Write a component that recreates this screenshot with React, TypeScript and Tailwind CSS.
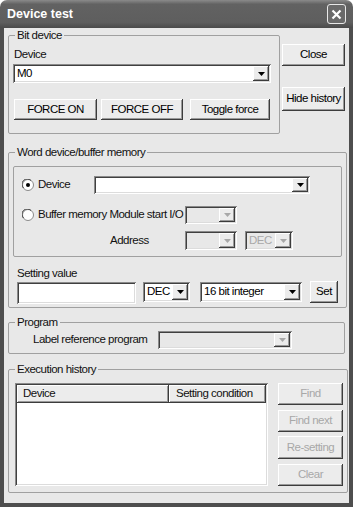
import React from 'react';

const raised =
  'bg-[#ececec] shadow-[inset_-1px_-1px_#3c3c3c,inset_1px_1px_#ffffff,inset_-2px_-2px_#9a9a9a]';
const sunken =
  'shadow-[inset_1px_1px_#8a8a8a,inset_-1px_-1px_#ffffff,inset_2px_2px_#404040,inset_-2px_-2px_#dcdcdc]';

const Arrow = ({ disabled }: { disabled?: boolean }) => (
  <svg width="7" height="4" viewBox="0 0 7 4">
    <polygon points="0,0 7,0 3.5,4" fill={disabled ? '#a8a8a8' : '#000'} />
  </svg>
);

const Btn = ({
  children,
  className = '',
  disabled,
}: {
  children: React.ReactNode;
  className?: string;
  disabled?: boolean;
}) => (
  <div
    className={`flex items-center justify-center leading-none ${raised} ${
      disabled ? 'text-[#a8a8a8]' : 'text-black'
    } ${className}`}
  >
    {children}
  </div>
);

const Combo = ({
  value,
  className = '',
  disabled,
}: {
  value?: string;
  className?: string;
  disabled?: boolean;
}) => (
  <div
    className={`flex items-stretch p-[2px] ${sunken} ${disabled ? 'bg-[#e8e8e8]' : 'bg-white'} ${className}`}
  >
    <span
      className={`flex-1 flex items-center pl-[2px] leading-none overflow-hidden whitespace-nowrap ${
        disabled ? 'text-[#a8a8a8]' : 'text-black'
      }`}
    >
      {value}
    </span>
    <div className={`w-[16px] flex items-center justify-center ${raised}`}>
      <Arrow disabled={disabled} />
    </div>
  </div>
);

const Radio = ({ checked }: { checked?: boolean }) => (
  <svg width="12" height="12" viewBox="0 0 12 12" className="shrink-0">
    <circle cx="6" cy="6" r="5.5" fill="#fff" stroke="#8a8a8a" />
    <path d="M1.5 9 A5 5 0 0 1 9 1.5" fill="none" stroke="#404040" strokeWidth="1" />
    {checked && <circle cx="6" cy="6" r="2" fill="#000" />}
  </svg>
);

const Group = ({
  title,
  className = '',
  children,
}: {
  title: string;
  className?: string;
  children: React.ReactNode;
}) => (
  <fieldset className={`border border-[#a0a0a0] rounded-[2px] px-[4px] ${className}`}>
    <legend className="ml-[2px] px-[2px] leading-[13px]">{title}</legend>
    {children}
  </fieldset>
);

export default function App() {
  return (
    <div className="w-[353px] h-[507px] bg-white flex flex-col font-['Liberation_Sans','Arial',sans-serif] text-[11.5px] text-[#111] tracking-[-0.5px] select-none">
      {/* Title bar */}
      <div className="h-[28px] shrink-0 rounded-t-[7px] bg-[linear-gradient(to_bottom,#8a8a8a,#626262_15%,#5e5e5e_80%,#4a4a4a)] flex items-center justify-between pl-[7px] pr-[7px]">
        <span className="text-white font-bold text-[12.5px] tracking-normal">Device test</span>
        <div className="w-[19px] h-[20px] rounded-[3px] border border-[#e8e8e8] bg-[#6a6a6a] flex items-center justify-center">
          <svg width="11" height="11" viewBox="0 0 11 11">
            <path d="M1.5 1.5 L9.5 9.5 M9.5 1.5 L1.5 9.5" stroke="#fff" strokeWidth="2.2" />
          </svg>
        </div>
      </div>

      {/* Body */}
      <div className="flex-1 bg-[#e8e8e8] border-x-4 border-b-4 border-[#4e4e4e] pl-[4px] pt-[1px]">
        <div className="flex">
          <Group title="Bit device" className="w-[272px] pb-[13px]">
            <div className="ml-[1px] mt-[6px] leading-[13px]">Device</div>
            <Combo value="M0" className="mt-[3px] w-[258px] h-[19px]" />
            <div className="flex mt-[16px]">
              <Btn className="ml-[1px] w-[83px] h-[21px]">FORCE ON</Btn>
              <Btn className="ml-[4px] w-[82px] h-[21px]">FORCE OFF</Btn>
              <Btn className="ml-[7px] w-[80px] h-[21px]">Toggle force</Btn>
            </div>
          </Group>
          <div className="ml-[2px] w-[63px] pt-[15px] flex flex-col">
            <Btn className="h-[22px]">Close</Btn>
            <Btn className="mt-[21px] h-[24px]">Hide history</Btn>
          </div>
        </div>

        <Group title="Word device/buffer memory" className="w-[337px] mt-[12px] pb-[3px]">
          <div className="mt-[7px] w-[329px] border border-[#a0a0a0] rounded-[2px] pl-[8px] pb-[6px]">
            <div className="flex items-center mt-[9px] h-[18px]">
              <Radio checked />
              <span className="ml-[4px] w-[56px]">Device</span>
              <Combo className="w-[216px] h-[18px]" />
            </div>
            <div className="flex items-center mt-[12px] h-[18px]">
              <Radio />
              <span className="ml-[4px] w-[147px] whitespace-nowrap">Buffer memory Module start I/O</span>
              <Combo disabled className="w-[52px] h-[18px]" />
            </div>
            <div className="flex items-center mt-[7px] h-[19px]">
              <span className="ml-[88px] w-[75px]">Address</span>
              <Combo disabled className="w-[52px] h-[19px]" />
              <Combo disabled value="DEC" className="ml-[8px] w-[48px] h-[19px]" />
            </div>
          </div>
          <div className="ml-[4px] mt-[10px] leading-[13px]">Setting value</div>
          <div className="flex items-start mt-[2px]">
            <div className={`ml-[4px] w-[119px] h-[22px] bg-white ${sunken}`} />
            <Combo value="DEC" className="ml-[7px] w-[47px] h-[20px]" />
            <Combo value="16 bit integer" className="ml-[10px] w-[102px] h-[20px]" />
            <Btn className="ml-[8px] -mt-[1px] w-[28px] h-[22px]">Set</Btn>
          </div>
        </Group>

        <Group title="Program" className="w-[337px] mt-[8px] pb-[4px]">
          <div className="flex items-center mt-[2px] h-[18px]">
            <span className="ml-[20px] w-[125px] whitespace-nowrap">Label reference program</span>
            <Combo disabled className="w-[134px] h-[18px]" />
          </div>
        </Group>

        <Group title="Execution history" className="w-[337px] mt-[9px] pb-[6px]">
          <div className="flex mt-[7px]">
            <div className={`ml-[2px] w-[253px] h-[103px] bg-white p-[2px] ${sunken}`}>
              <div className="flex h-[18px]">
                <div className={`w-[152px] flex items-center pl-[6px] ${raised}`}>Device</div>
                <div className={`w-[97px] flex items-center pl-[7px] whitespace-nowrap ${raised}`}>
                  Setting condition
                </div>
              </div>
            </div>
            <div className="ml-[10px] w-[65px] flex flex-col">
              <Btn disabled className="h-[22px]">Find</Btn>
              <Btn disabled className="mt-[5px] h-[22px]">Find next</Btn>
              <Btn disabled className="mt-[4px] h-[23px]">Re-setting</Btn>
              <Btn disabled className="mt-[5px] h-[22px]">Clear</Btn>
            </div>
          </div>
        </Group>
      </div>
    </div>
  );
}
